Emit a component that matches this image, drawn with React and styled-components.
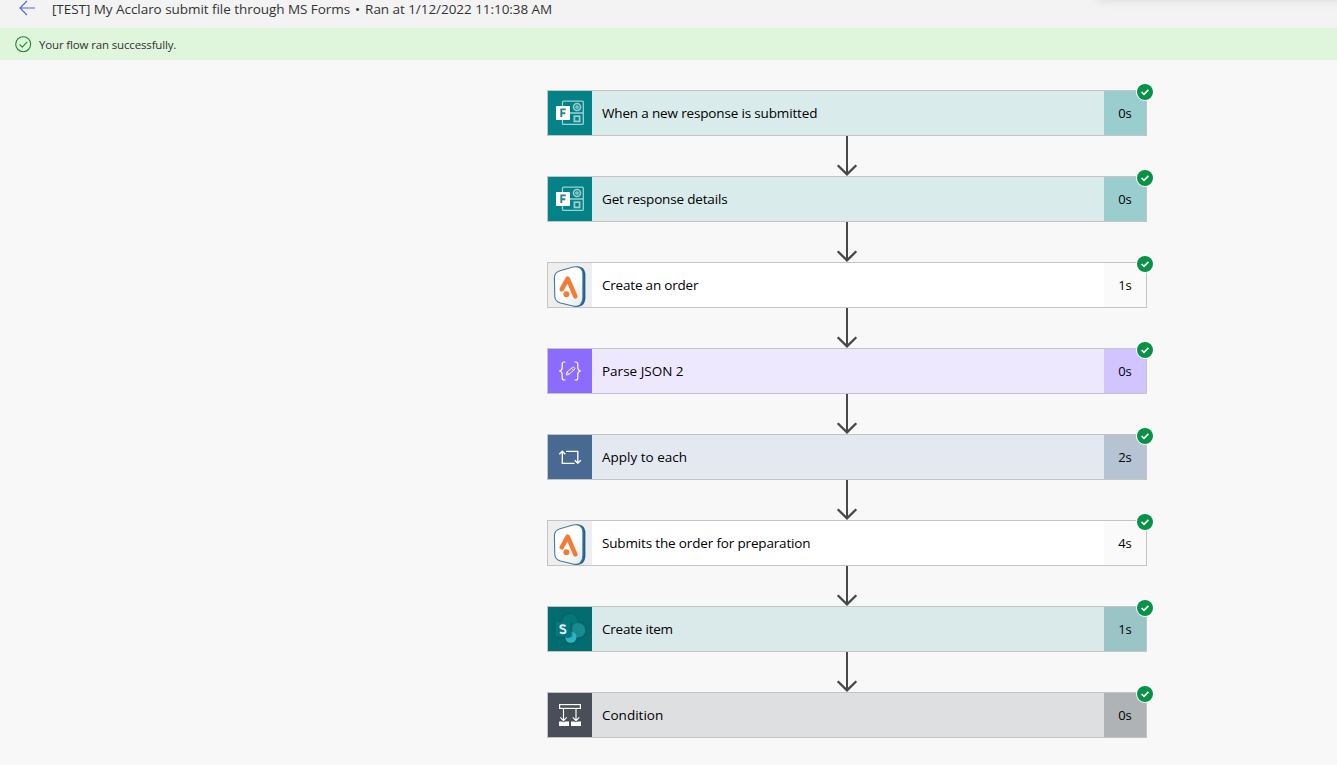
import React from 'react';
import styled, { createGlobalStyle } from 'styled-components';

const GlobalStyle = createGlobalStyle`
  * { box-sizing: border-box; }
  html, body { margin: 0; padding: 0; background: #f8f8f8; }
  body { font-family: "Open Sans", "Noto Sans", sans-serif; color: #000; overflow: hidden; }
`;

const Page = styled.div`
  height: 765px;
  display: flex;
  flex-direction: column;
  background: #f8f8f8;
  overflow: hidden;
`;

const Header = styled.header`
  position: relative;
  flex: none;
  height: 28px;
  display: flex;
  align-items: flex-start;
  padding-left: 18px;
  background: #f3f3f3;
  overflow: hidden;
  svg { flex: none; display: block; }
`;

const PanelShadow = styled.div`
  position: absolute;
  left: 1097px;
  right: -20px;
  top: -11px;
  height: 10px;
  box-shadow: 0 0 12px rgba(0, 0, 0, 0.14);
`;

const Title = styled.h1`
  display: flex;
  margin: 0 0 0 16px;
  font-size: 13.5px;
  font-weight: 400;
  line-height: 18px;
  color: #333;
  white-space: nowrap;
`;

const TitlePart = styled.span`
  letter-spacing: ${(p) => p.$spacing}px;
`;

const Separator = styled.span`
  width: 15px;
  text-align: center;
`;

const Banner = styled.div`
  flex: none;
  height: 32px;
  display: flex;
  align-items: center;
  gap: 7px;
  padding-left: 15px;
  background: #dff6dd;
  font-size: 11.5px;
  color: #333;
  svg { display: block; }
`;

const BannerText = styled.span`
  line-height: 16px;
  letter-spacing: -0.15px;
  padding-top: 1px;
  white-space: nowrap;
`;

const Flow = styled.main`
  width: 600px;
  margin: 30px 0 0 547px;
  display: flex;
  flex-direction: column;
  align-items: center;
`;

const Card = styled.section`
  position: relative;
  flex: none;
  width: 600px;
  height: 46px;
  display: flex;
  border: 1px solid #c4c4c4;
  background: ${(p) => p.$bg};
`;

const IconTile = styled.div`
  width: 44px;
  height: 44px;
  background: ${(p) => p.$bg};
  svg { display: block; }
`;

const Label = styled.div`
  flex: 1;
  padding-left: 10px;
  font-size: 13.5px;
  line-height: 44px;
  letter-spacing: ${(p) => p.$spacing}px;
  white-space: nowrap;
`;

const Duration = styled.div`
  width: 42px;
  background: ${(p) => p.$bg};
  font-size: 13px;
  line-height: 44px;
  text-align: center;
`;

const StatusBadge = styled.div`
  position: absolute;
  right: -8px;
  top: -8px;
  width: 18px;
  height: 18px;
  svg { display: block; }
`;

const Connector = styled.div`
  flex: none;
  height: 40px;
  svg { display: block; }
`;

const BackArrow = () => (
  <svg width="18" height="18" viewBox="0 0 18 18" fill="none" stroke="#4a6cf0" strokeWidth="1.2">
    <path d="M17 8H2M9 1L2 8l7 7" />
  </svg>
);

const SuccessIcon = () => (
  <svg width="17" height="17" viewBox="0 0 17 17" fill="none" stroke="#1c8a2c" strokeWidth="1.1">
    <circle cx="8.2" cy="8.2" r="7.5" />
    <path d="M4.6 8.4l2.6 2.7 5-5.2" />
  </svg>
);

const CheckBadge = () => (
  <svg width="18" height="18" viewBox="0 0 18 18">
    <circle cx="9" cy="9" r="9" fill="#fff" />
    <circle cx="9" cy="9" r="8" fill="#079245" />
    <path d="M5.6 9l2.4 2.3 4.4-4.5" fill="none" stroke="#fff" strokeWidth="1.7" />
  </svg>
);

const DownArrow = () => (
  <svg width="22" height="40" viewBox="0 0 22 40" fill="none" stroke="#484848">
    <path d="M11 0v38" strokeWidth="2" />
    <path d="M1.7 29.3L11 38.4l9.3-9.1" strokeWidth="2.3" />
  </svg>
);

const FormsIcon = () => (
  <svg width="44" height="44" viewBox="0 0 44 44">
    <g fill="none" stroke="#9fd0d1" strokeWidth="1.3">
      <path d="M14.5 15v-3.800q0-1 1-1h18.800q1 0 1 1v21.200q0 1-1 1H15.500q-1 0-1-1V29M22 22h13" />
      <circle cx="29" cy="16" r="3.500" strokeWidth="1.600" />
      <circle cx="29" cy="16" r="1.200" />
      <rect x="26.400" y="25.200" width="5.200" height="5.200" strokeWidth="1.700" />
    </g>
    <rect x="8" y="15" width="14" height="14" rx="0.8" fill="#fff" />
    <path d="M13.300 26v-7.600h4.500M13.300 22.200h4" fill="none" stroke="#2b8587" strokeWidth="1.900" />
  </svg>
);

const AcclaroIcon = () => (
  <svg width="44" height="44" viewBox="0 0 44 44">
    <defs>
      <linearGradient id="tileFace" x1="0" y1="0" x2="1" y2="1">
        <stop offset="0.5" stopColor="#fff" />
        <stop offset="1" stopColor="#e4e9ee" />
      </linearGradient>
    </defs>
    <path d="M27 3.200Q36.500 2.500 37.400 10.500V35.500Q36.800 43.500 29 44L25 43.700Q32.500 42 33 35V10Q33 5 27 3.200Z" fill="#20618c" />
    <path d="M12 7.700L25 4Q34.400 2.600 34.900 11V34.500Q34.400 44.200 26 43.300L12.500 40Q7 38.300 6.800 33.500L6.400 14.500Q6.500 9.400 12 7.700Z" fill="url(#tileFace)" stroke="#447b9e" strokeWidth="1.100" />
    <path d="M13.700 26.300L19.700 15.600L27.400 33.400" fill="none" stroke="#f47b35" strokeWidth="4.500" strokeLinecap="round" strokeLinejoin="round" />
    <circle cx="18.400" cy="31.300" r="3" fill="#f47b35" />
  </svg>
);

const JsonIcon = () => (
  <svg width="44" height="44" viewBox="0 0 44 44" fill="none" stroke="#fff" strokeWidth="1.200">
    <path d="M17.500 13h-1.300q-2 0-2 2v3.800q0 2.800-2.900 3.200q2.900.4 2.900 3.200V29q0 2 2 2h1.300" />
    <path d="M26.500 13h1.300q2 0 2 2v3.800q0 2.800 2.900 3.200q-2.900.4-2.900 3.200V29q0 2-2 2h-1.300" />
    <path d="M18.200 26l.8-3 5.600-4.700q1.500-.6 2 .5t-.4 2L20.800 25.400zM23.500 19.300l2 2M19 23l1.800 2.200" strokeWidth="0.9" />
  </svg>
);

const LoopIcon = () => (
  <svg width="44" height="44" viewBox="0 0 44 44" fill="none" stroke="#fff" strokeWidth="1.350">
    <path d="M18 16.400h11.800V28M26.800 25.200l3 3 3-3" />
    <path d="M26.500 28.400H14.300V16.500M11.300 19.300l3-3 3 3" />
  </svg>
);

const SharePointIcon = () => (
  <svg width="44" height="44" viewBox="0 0 44 44">
    <defs>
      <filter id="glow" x="-30%" y="-30%" width="160%" height="160%">
        <feGaussianBlur stdDeviation="1.5" />
      </filter>
    </defs>
    <g fill="#06565a" opacity="0.55" filter="url(#glow)">
      <circle cx="22" cy="15.800" r="8.800" />
      <circle cx="30.200" cy="23.800" r="8" />
      <circle cx="22.800" cy="30.800" r="6.500" />
      <rect x="7" y="15" width="16" height="16" />
    </g>
    <circle cx="22" cy="15.200" r="8" fill="#04777b" />
    <circle cx="30.200" cy="23.200" r="7.200" fill="#188b91" />
    <circle cx="22.800" cy="30.300" r="5.700" fill="#2fb3c1" />
    <path d="M17 15h7.300v14.500q-2.300 2-7 1.700z" fill="#04575c" opacity="0.6" />
    <rect x="7.600" y="14.700" width="15" height="15" rx="1" fill="#04787c" />
    <path d="M17.600 19.200q-1.300-1-3-.9-2.200.1-2.200 1.700 0 1.200 2.500 1.900 2.700.7 2.700 2.300 0 2-2.700 2-1.700 0-2.900-.9" fill="none" stroke="#e1f3f3" strokeWidth="2" />
  </svg>
);

const ConditionIcon = () => (
  <svg width="44" height="44" viewBox="0 0 44 44" fill="none" stroke="#fff">
    <rect x="11.600" y="11.600" width="20.800" height="3.800" strokeWidth="1.200" />
    <path d="M15.500 16v11.500M12.300 24.300l3.200 3.300 3.200-3.300M28 16v11.500M24.800 24.300l3.200 3.300 3.200-3.300" strokeWidth="1.150" />
    <path d="M11 28.500h3l1.500.7 1.500-.7h4V33H11zM23 28.500h3.500l1.500.7 1.500-.7H33V33H23z" fill="#fff" stroke="none" />
  </svg>
);

const steps = [
  { label: 'When a new response is submitted', time: '0s', Icon: FormsIcon, tile: '#038387', bg: '#d9eceb', end: '#9acdcd', spacing: -0.16 },
  { label: 'Get response details', time: '0s', Icon: FormsIcon, tile: '#038387', bg: '#d9eceb', end: '#9acdcd', spacing: -0.17 },
  { label: 'Create an order', time: '1s', Icon: AcclaroIcon, tile: '#eeeeee', bg: '#ffffff', end: '#fafafa', spacing: -0.2 },
  { label: 'Parse JSON 2', time: '0s', Icon: JsonIcon, tile: '#8c6cff', bg: '#eee8ff', end: '#d1c4ff', spacing: 0 },
  { label: 'Apply to each', time: '2s', Icon: LoopIcon, tile: '#486991', bg: '#e4e9f1', end: '#b6c3d3', spacing: 0 },
  { label: 'Submits the order for preparation', time: '4s', Icon: AcclaroIcon, tile: '#eeeeee', bg: '#ffffff', end: '#fafafa', spacing: -0.16 },
  { label: 'Create item', time: '1s', Icon: SharePointIcon, tile: '#036c70', bg: '#dae9e9', end: '#9ac4c6', spacing: -0.22 },
  { label: 'Condition', time: '0s', Icon: ConditionIcon, tile: '#484f58', bg: '#dedfe0', end: '#b0b3b6', spacing: 0 },
];

export default function App() {
  return (
    <Page>
      <GlobalStyle />
      <Header>
        <BackArrow />
        <Title>
          <TitlePart $spacing={-0.05}>[TEST] My Acclaro submit file through MS Forms</TitlePart>
          <Separator>•</Separator>
          <TitlePart $spacing={-0.05}>Ran at 1/12/2022 11:10:38 AM</TitlePart>
        </Title>
        <PanelShadow />
      </Header>
      <Banner>
        <SuccessIcon />
        <BannerText>Your flow ran successfully.</BannerText>
      </Banner>
      <Flow>
        {steps.map(({ label, time, Icon, tile, bg, end, spacing }, i) => (
          <React.Fragment key={label}>
            {i > 0 && <Connector><DownArrow /></Connector>}
            <Card $bg={bg}>
              <IconTile $bg={tile}><Icon /></IconTile>
              <Label $spacing={spacing}>{label}</Label>
              <Duration $bg={end}>{time}</Duration>
              <StatusBadge><CheckBadge /></StatusBadge>
            </Card>
          </React.Fragment>
        ))}
      </Flow>
    </Page>
  );
}
